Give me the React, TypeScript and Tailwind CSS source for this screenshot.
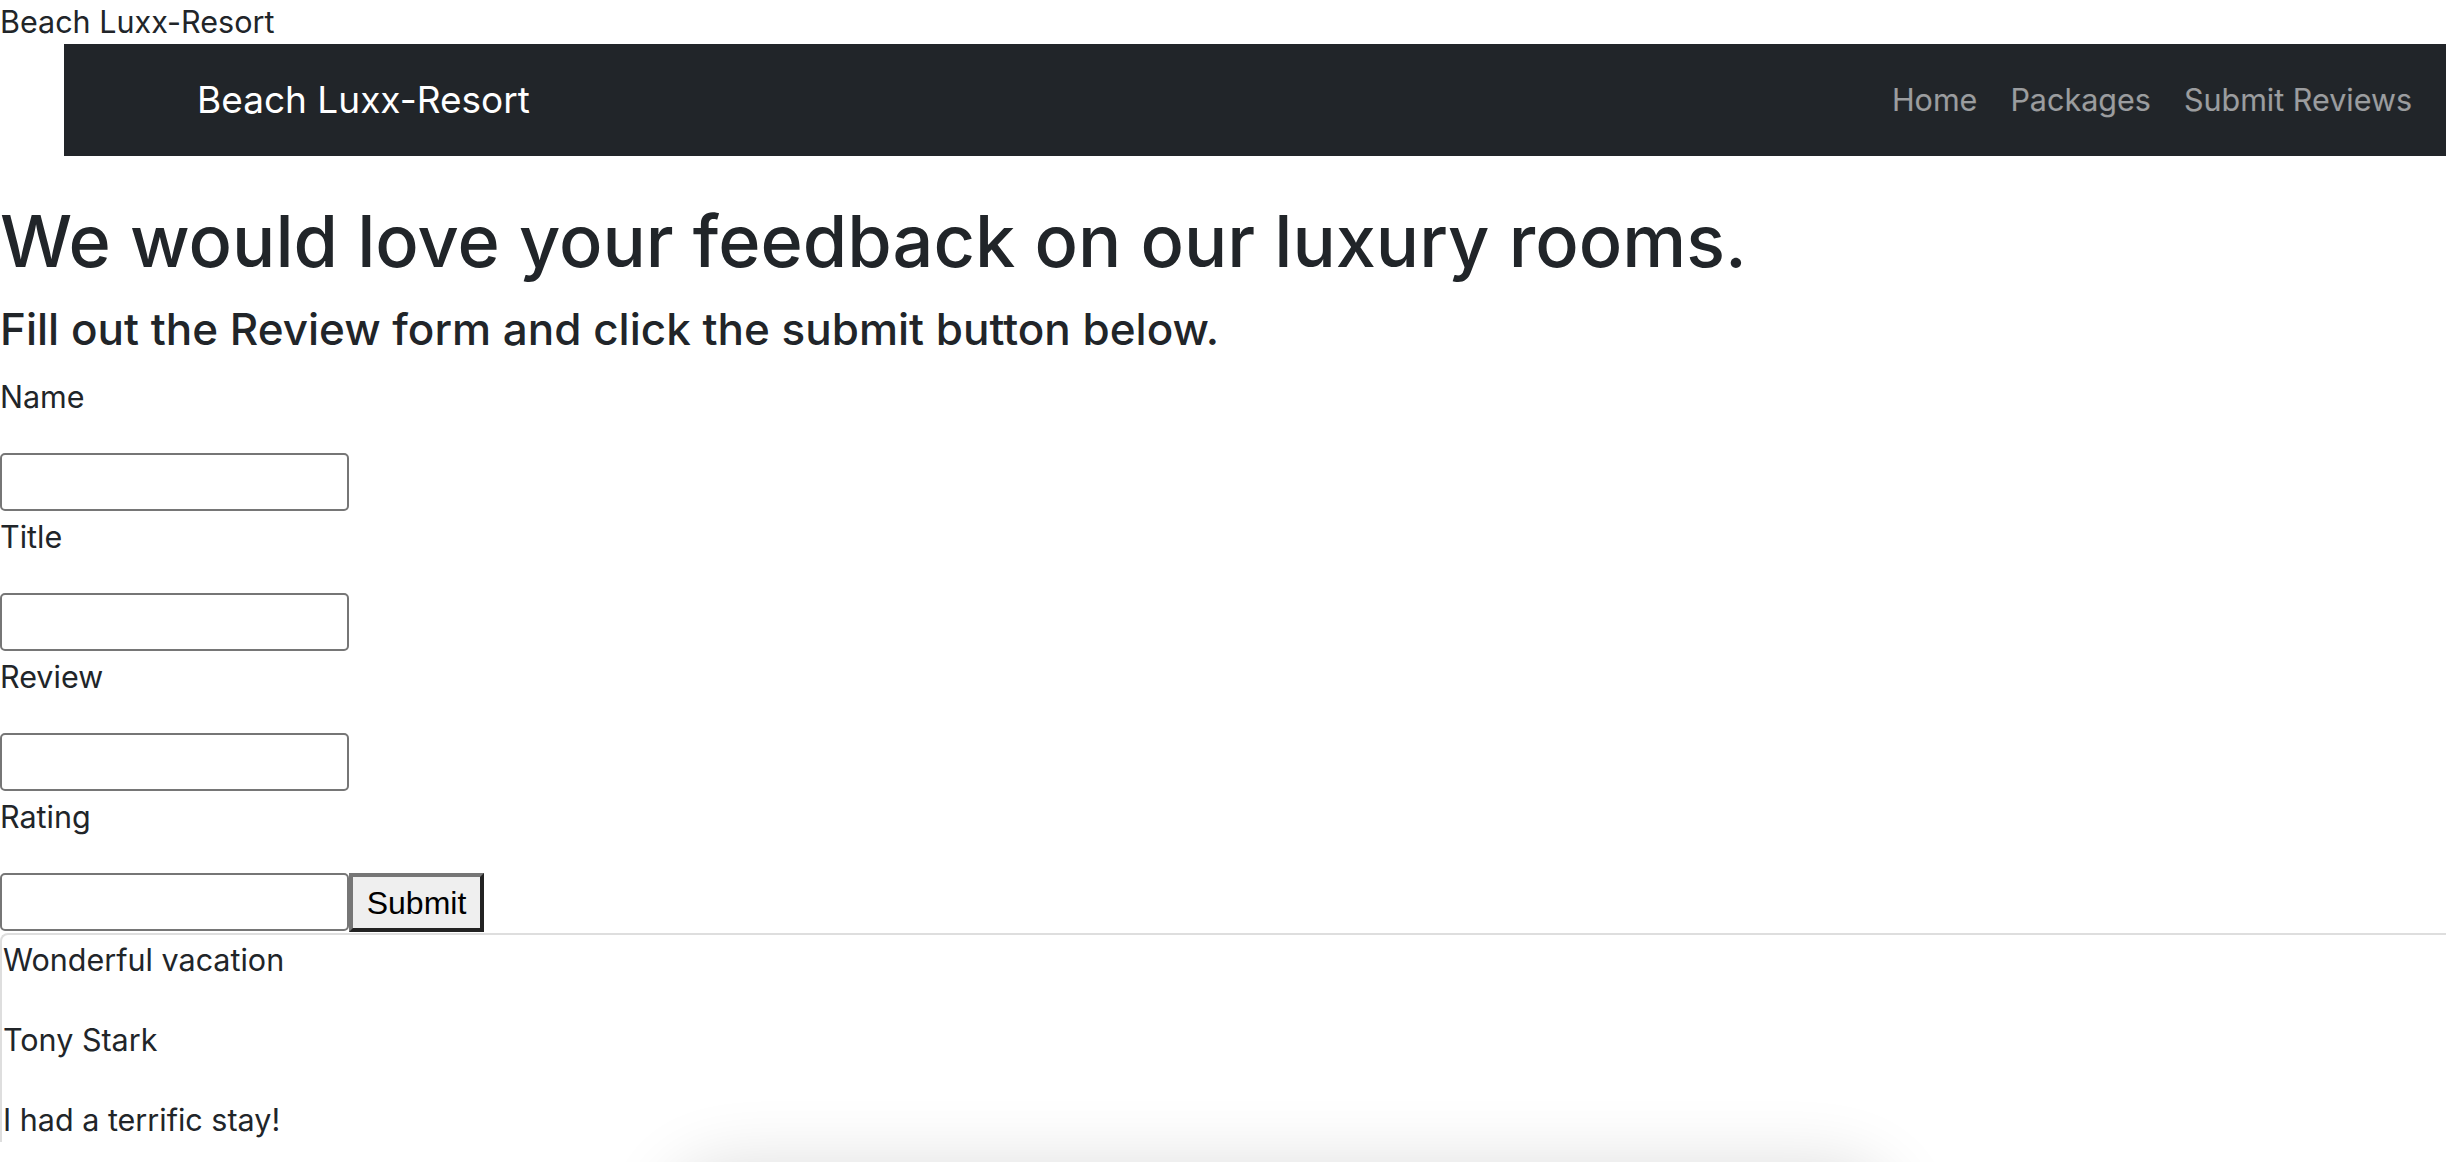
const fields = ["Name", "Title", "Review", "Rating"];

const reviews = ["Wonderful vacation", "Tony Stark", "I had a terrific stay!"];

export default function App() {
  return (
    <div className="min-h-screen bg-white text-[#212529] font-['Inter','Noto_Sans',sans-serif] text-[30.5px] leading-[44px]">
      <div>Beach Luxx-Resort</div>

      {/* Navbar */}
      <nav className="ml-[64px] h-[112px] bg-[#212529] flex items-center justify-between pl-[133px] pr-[34px]">
        <a href="#" className="text-[37px] text-white">
          Beach Luxx-Resort
        </a>
        <div className="flex gap-[33px] text-white/55">
          <a href="#">Home</a>
          <a href="#">Packages</a>
          <a href="#">Submit Reviews</a>
        </div>
      </nav>

      <h1 className="mt-[42px] text-[72px] font-medium leading-[86px]">
        We would love your feedback on our luxury rooms.
      </h1>
      <h4 className="mt-[19px] text-[44px] font-medium leading-[53px]">
        Fill out the Review form and click the submit button below.
      </h4>

      {/* Review form */}
      <form className="mt-[19px]">
        {fields.map((f, i) => (
          <div key={f}>
            <label className="block mb-[34px]">{f}</label>
            <div className="flex items-start mb-[4px]">
              <input className="w-[349px] h-[58px] border-2 border-[#767676] rounded-[5px] bg-white" />
              {i === fields.length - 1 && (
                <button
                  type="button"
                  className="w-[135px] h-[59px] bg-[#efefef] border-[4px] border-t-[#767676] border-l-[#767676] border-r-[#222] border-b-[#222] font-['Liberation_Sans',Arial,sans-serif] text-[32px] text-black leading-none"
                >
                  Submit
                </button>
              )}
            </div>
          </div>
        ))}
      </form>

      {/* Reviews */}
      <div className="-mt-[3px] border-t-2 border-l-2 border-[#dedede] rounded-tl-[8px] pt-[3px] pl-[1px]">
        {reviews.map((r) => (
          <p key={r} className="mb-[36px]">
            {r}
          </p>
        ))}
      </div>

      <div className="fixed left-[690px] top-[1190px] w-[1180px] h-[200px] rounded-[40px] bg-white shadow-[0_0_70px_25px_rgba(0,0,0,0.14)]" />
    </div>
  );
}
